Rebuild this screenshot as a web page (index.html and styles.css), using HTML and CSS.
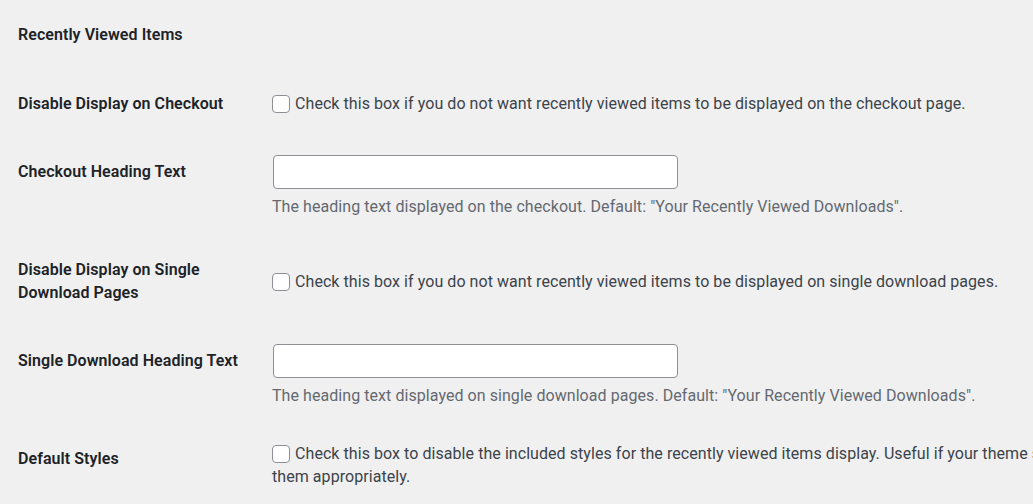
FILE: index.html
```html
<!DOCTYPE html>
<html lang="en">
<head>
  <meta charset="UTF-8">
  <title>Recently Viewed Items</title>
  <meta name="viewport" content="width=device-width, initial-scale=1.0">
  <link rel="stylesheet" href="styles.css">
</head>
<body>
  <table class="form-table">
    <tbody>
      <tr class="section-row">
        <th scope="row">Recently Viewed Items</th>
        <td></td>
      </tr>
      <tr>
        <th scope="row">Disable Display on Checkout</th>
        <td class="check-cell">
          <label><input type="checkbox" class="check"> Check this box if you do not want recently viewed items to be displayed on the checkout page.</label>
        </td>
      </tr>
      <tr>
        <th scope="row">Checkout Heading Text</th>
        <td>
          <input type="text" class="regular-text">
          <p class="description">The heading text displayed on the checkout. Default: "Your Recently Viewed Downloads".</p>
        </td>
      </tr>
      <tr>
        <th scope="row">Disable Display on Single Download Pages</th>
        <td class="check-cell">
          <label><input type="checkbox" class="check"> Check this box if you do not want recently viewed items to be displayed on single download pages.</label>
        </td>
      </tr>
      <tr>
        <th scope="row">Single Download Heading Text</th>
        <td>
          <input type="text" class="regular-text">
          <p class="description">The heading text displayed on single download pages. Default: "Your Recently Viewed Downloads".</p>
        </td>
      </tr>
      <tr>
        <th scope="row">Default Styles</th>
        <td class="check-cell">
          <label><input type="checkbox" class="check"> Check this box to disable the included styles for the recently viewed items display. Useful if your theme styles them appropriately.</label>
        </td>
      </tr>
    </tbody>
  </table>
</body>
</html>
```

FILE: styles.css
```css
html, body {
  overflow: hidden;
}
body {
  margin: 0;
  padding: 1px 0 0 18px;
  background: #f0f0f1;
  font-family: Roboto, "Noto Sans", sans-serif;
  font-size: 16px;
  line-height: 23px;
  letter-spacing: 0.06px;
  color: #3c434a;
  width: 1100px;
}
.form-table {
  border-collapse: collapse;
  width: 1082px;
  table-layout: fixed;
}
.form-table th {
  width: 244px;
  padding: 25px 10px 20px 0;
  text-align: left;
  vertical-align: top;
  font-weight: 600;
  color: #1d2327;
}
.form-table td {
  padding: 20px 10px 15px 0;
  vertical-align: middle;
}
.section-row th {
  padding: 22px 10px 21px 0;
}
.check {
  -webkit-appearance: none;
  appearance: none;
  width: 18px;
  height: 18px;
  margin: 0 1px 0 0;
  border: 1px solid #8c8f94;
  border-radius: 4px;
  background: #fff;
  vertical-align: -4px;
}
.regular-text {
  display: block;
  box-sizing: border-box;
  width: 405px;
  height: 34px;
  margin: 0 0 0 1px;
  border: 1px solid #8c8f94;
  border-radius: 4px;
  background: #fff;
}
.description {
  margin: 6px 0 0;
  color: #646970;
}
```
